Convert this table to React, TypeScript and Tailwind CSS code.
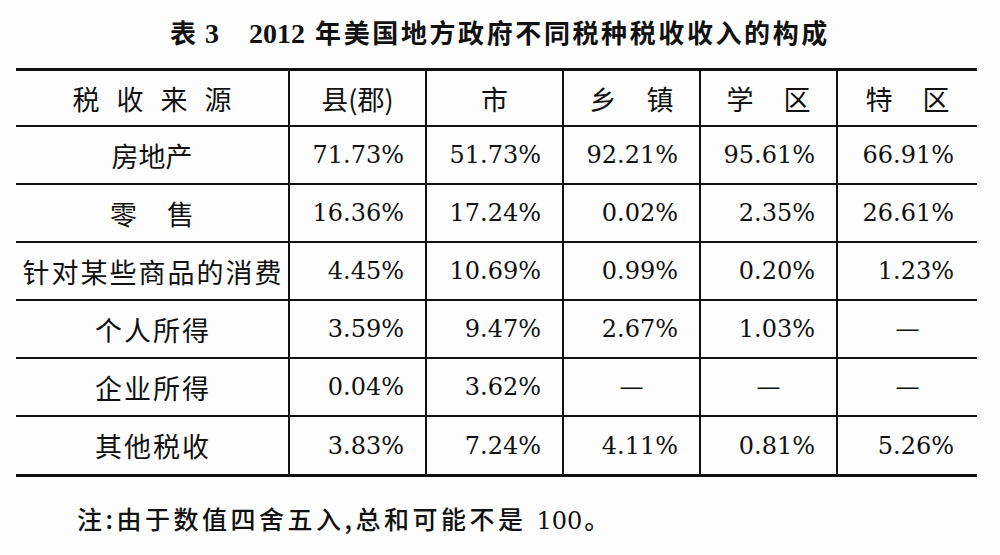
import React from "react";

const cjk = "font-['Noto_Sans_CJK_SC',sans-serif]";
const serif = "font-['DejaVu_Serif',serif]";

type Row = {
  label: string;
  gap?: number;
  values: string[];
};

const cols = "grid grid-cols-[274px_137px_137px_137px_137px_139px]";

const rows: Row[] = [
  { label: "房地产", values: ["71.73%", "51.73%", "92.21%", "95.61%", "66.91%"] },
  { label: "零售", gap: 30, values: ["16.36%", "17.24%", "0.02%", "2.35%", "26.61%"] },
  { label: "针对某些商品的消费", gap: 2, values: ["4.45%", "10.69%", "0.99%", "0.20%", "1.23%"] },
  { label: "个人所得", gap: 2, values: ["3.59%", "9.47%", "2.67%", "1.03%", "—"] },
  { label: "企业所得", gap: 2, values: ["0.04%", "3.62%", "—", "—", "—"] },
  { label: "其他税收", gap: 2, values: ["3.83%", "7.24%", "4.11%", "0.81%", "5.26%"] },
];

// chars laid out one by one so the spacing stays centred
function Spaced({ text, gap = 0 }: { text: string; gap?: number }) {
  return (
    <span className="flex" style={{ gap }}>
      {Array.from(text).map((ch, i) => (
        <span key={i}>{ch}</span>
      ))}
    </span>
  );
}

function HeadCell({ text, gap, last }: { text: string; gap?: number; last?: boolean }) {
  return (
    <div
      className={`flex items-center justify-center ${last ? "" : "border-r-2 border-[#111]"} ${cjk} text-[27px] leading-none text-[#111]`}
    >
      <Spaced text={text} gap={gap} />
    </div>
  );
}

function ValueCell({ value, last }: { value: string; last?: boolean }) {
  const dash = value === "—";
  return (
    <div
      className={`flex items-center ${dash ? "justify-center" : last ? "justify-end pr-[23px]" : "justify-end pr-[21px]"} ${last ? "" : "border-r-2 border-[#111]"} ${serif} text-[24px] leading-none text-[#111]`}
    >
      {value}
    </div>
  );
}

export default function App() {
  return (
    <div className="w-[1000px] h-[555px] bg-[#fdfdfd] overflow-hidden">
      <div className="h-[68px] pt-[19px] flex justify-center">
        <h1 className="flex items-baseline text-[26px] font-bold leading-none text-[#111]">
          <span className={`${cjk}`}>表</span>
          <span className="font-['Liberation_Serif',serif] text-[28px] ml-[9px]">3</span>
          <span className="font-['Liberation_Serif',serif] text-[28px] ml-[30px]">2012</span>
          <span className={`${cjk} ml-[10px] tracking-[2.6px]`}>年美国地方政府不同税种税收收入的构成</span>
        </h1>
      </div>

      <div className="ml-[16px] w-[961px]">
        <div className={`${cols} h-[59px] border-t-[3px] border-b-2 border-[#111]`}>
          <HeadCell text="税收来源" gap={17} />
          <HeadCell text="县(郡)" />
          <HeadCell text="市" />
          <HeadCell text="乡镇" gap={30} />
          <HeadCell text="学区" gap={30} />
          <HeadCell text="特区" gap={30} last />
        </div>
        {rows.map((row, r) => (
          <div
            key={row.label}
            className={`${cols} ${r === rows.length - 1 ? "h-[60px] border-b-[3px]" : "h-[58px] border-b-2"} border-[#111]`}
          >
            <HeadCell text={row.label} gap={row.gap} />
            {row.values.map((v, i) => (
              <ValueCell key={i} value={v} last={i === row.values.length - 1} />
            ))}
          </div>
        ))}
      </div>

      <p className={`mt-[29px] ml-[77px] ${cjk} text-[25px] leading-none font-medium tracking-[3.5px] text-[#111]`}>
        注:由于数值四舍五入,总和可能不是<span className={`${serif} font-normal tracking-normal text-[24px] ml-[10px] mr-[2px]`}>100</span>。
      </p>
    </div>
  );
}
